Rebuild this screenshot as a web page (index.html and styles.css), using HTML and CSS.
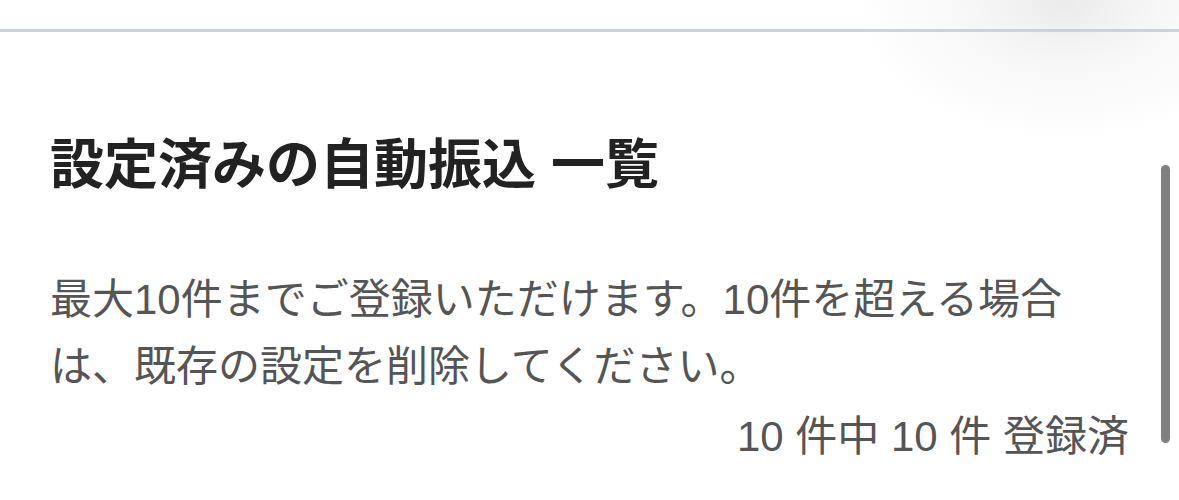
FILE: index.html
```html
<!DOCTYPE html>
<html lang="ja">
<head>
<meta charset="utf-8">
<link rel="stylesheet" href="styles.css">
</head>
<body>
<div class="page">
  <div class="topbar"></div>
  <main class="content">
    <h1 class="title">設定済みの自動振込 一覧</h1>
    <p class="desc">最大10件までご登録いただけます。10件を超える場合は、既存の設定を削除してください。</p>
    <p class="count">10 件中 10 件 登録済</p>
  </main>
  <div class="scrollbar"></div>
</div>
</body>
</html>
```

FILE: styles.css
```css
html, body {
  margin: 0;
  padding: 0;
  background: #ffffff;
}
body {
  font-family: "Liberation Sans", "Noto Sans CJK JP", sans-serif;
  overflow: hidden;
}
.page {
  position: relative;
  width: 1179px;
  height: 500px;
  background: radial-gradient(ellipse 210px 135px at 1065px 5px, #ebebeb 0%, rgba(245,245,245,0.8) 45%, rgba(255,255,255,0) 100%), #ffffff;
}
.topbar {
  height: 29px;
  border-bottom: 3px solid #cbd2d9;
}
.content {
  padding: 0 50px;
}
.title {
  margin: 101px 0 0;
  font-size: 54px;
  line-height: 65px;
  font-weight: 700;
  color: #222222;
}
.desc {
  margin: 68px 0 0;
  font-size: 42px;
  line-height: 67px;
  color: #555555;
}
.count {
  margin: 3px 0 0;
  font-size: 42px;
  line-height: 67px;
  color: #555555;
  text-align: right;
}
.scrollbar {
  position: absolute;
  left: 1161px;
  top: 165px;
  width: 9px;
  height: 278px;
  border-radius: 5px;
  background: #808080;
}
```
